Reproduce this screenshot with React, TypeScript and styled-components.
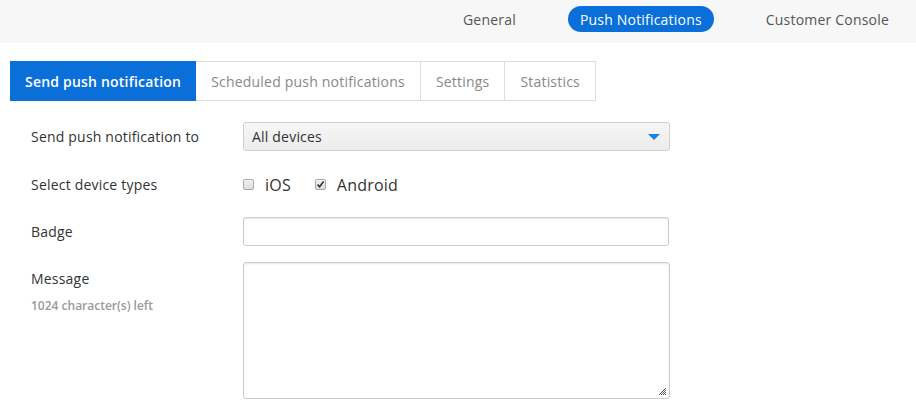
import React from "react";
import styled, { createGlobalStyle } from "styled-components";

const Global = createGlobalStyle`
  html, body { margin: 0; padding: 0; background: #fff; }
  body { font-family: "Open Sans", "Liberation Sans", sans-serif; color: #333; letter-spacing: 0.2px; }
  * { box-sizing: border-box; }
`;

const Page = styled.div`
  width: 916px;
  height: 410px;
  overflow: hidden;
`;

const TopBar = styled.nav`
  height: 43px;
  background: #f7f7f7;
  display: flex;
  align-items: flex-start;
  justify-content: flex-end;
  padding: 6px 15px 0 0;
  gap: 40px;
`;

const NavItem = styled.a<{ $active?: boolean }>`
  display: inline-flex;
  align-items: center;
  height: 26px;
  padding: 0 12px;
  border-radius: 13px;
  font-size: 14px;
  text-decoration: none;
  color: ${(p) => (p.$active ? "#fff" : "#555")};
  background: ${(p) => (p.$active ? "#0a6fd8" : "transparent")};
`;

const Tabs = styled.div`
  display: flex;
  margin: 18px 0 0 10px;
`;

const Tab = styled.div<{ $active?: boolean }>`
  height: 40px;
  display: flex;
  align-items: center;
  padding: 0 ${(p) => (p.$active ? 14 : 15)}px;
  font-size: 14px;
  font-weight: ${(p) => (p.$active ? 600 : 400)};
  color: ${(p) => (p.$active ? "#fff" : "#888")};
  background: ${(p) => (p.$active ? "#0a6fd8" : "#fff")};
  border: 1px solid ${(p) => (p.$active ? "#0a6fd8" : "#ddd")};
  border-left-width: ${(p) => (p.$active ? "1px" : "0")};
`;

const Form = styled.div`
  display: flex;
  flex-direction: column;
  padding: 21px 0 0 31px;
`;

const Row = styled.div<{ $h: number; $mb?: number }>`
  display: grid;
  grid-template-columns: 212px 427px;
  height: ${(p) => p.$h}px;
  margin-bottom: ${(p) => p.$mb ?? 0}px;
`;

const Label = styled.div<{ $top?: boolean }>`
  font-size: 14px;
  color: #333;
  display: flex;
  flex-direction: column;
  justify-content: ${(p) => (p.$top ? "flex-start" : "center")};
  padding-top: ${(p) => (p.$top ? "7px" : "0")};
`;

const Hint = styled.span`
  font-size: 12px;
  font-weight: 600;
  color: #999;
  letter-spacing: 0;
  margin-top: 9px;
`;

const Field = styled.div<{ $top?: boolean }>`
  display: flex;
  align-items: ${(p) => (p.$top ? "flex-start" : "center")};
`;

const Select = styled.div`
  width: 427px;
  height: 29px;
  border: 1px solid #d0d0d0;
  border-radius: 3px;
  background: linear-gradient(#f6f6f6, #ececec);
  display: flex;
  align-items: center;
  justify-content: space-between;
  padding: 0 9px 0 8px;
  font-size: 14px;
  color: #333;
`;

const Caret = styled.span`
  width: 0;
  height: 0;
  border-left: 6px solid transparent;
  border-right: 6px solid transparent;
  border-top: 6px solid #1a82e2;
`;

const Checks = styled.div`
  display: flex;
  align-items: center;
  gap: 24px;
`;

const CheckLabel = styled.label`
  display: flex;
  align-items: center;
  gap: 11px;
  font-size: 16px;
  color: #333;
`;

const Box = styled.span`
  width: 11px;
  height: 11px;
  border: 1px solid #aaa;
  border-radius: 2px;
  background: linear-gradient(#f2f2f2, #dcdcdc);
  display: flex;
  align-items: center;
  justify-content: center;
`;

const Input = styled.div`
  width: 426px;
  height: 29px;
  border: 1px solid #ccc;
  border-radius: 3px;
  box-shadow: inset 0 1px 2px rgba(0, 0, 0, 0.1);
  background: #fff;
`;

const TextArea = styled.div`
  position: relative;
  width: 427px;
  height: 137px;
  border: 1px solid #ccc;
  border-radius: 3px;
  box-shadow: inset 0 1px 2px rgba(0, 0, 0, 0.1);
  background: #fff;
`;

const Grip = styled.svg`
  position: absolute;
  right: 2px;
  bottom: 2px;
`;

export default function App() {
  return (
    <Page>
      <Global />
      <TopBar>
        <NavItem>General</NavItem>
        <NavItem $active>Push Notifications</NavItem>
        <NavItem>Customer Console</NavItem>
      </TopBar>
      <Tabs>
        <Tab $active>Send push notification</Tab>
        <Tab>Scheduled push notifications</Tab>
        <Tab>Settings</Tab>
        <Tab>Statistics</Tab>
      </Tabs>
      <Form>
        <Row $h={29} $mb={19}>
          <Label>Send push notification to</Label>
          <Field>
            <Select>
              All devices
              <Caret />
            </Select>
          </Field>
        </Row>
        <Row $h={29} $mb={18}>
          <Label>Select device types</Label>
          <Field>
            <Checks>
              <CheckLabel>
                <Box />
                iOS
              </CheckLabel>
              <CheckLabel>
                <Box>
                  <svg width="9" height="9" viewBox="0 0 9 9">
                    <path d="M1.5 4.5 L3.6 6.8 L7.6 1.6" fill="none" stroke="#333" strokeWidth="1.6" />
                  </svg>
                </Box>
                Android
              </CheckLabel>
            </Checks>
          </Field>
        </Row>
        <Row $h={29} $mb={16}>
          <Label>Badge</Label>
          <Field>
            <Input />
          </Field>
        </Row>
        <Row $h={137}>
          <Label $top>
            Message
            <Hint>1024 character(s) left</Hint>
          </Label>
          <Field $top>
            <TextArea>
              <Grip width="9" height="9" viewBox="0 0 9 9">
                <path d="M8 1 L1 8 M8 3 L3 8 M8 5 L5 8 M8 7 L7 8" stroke="#555" strokeWidth="1" />
              </Grip>
            </TextArea>
          </Field>
        </Row>
      </Form>
    </Page>
  );
}
